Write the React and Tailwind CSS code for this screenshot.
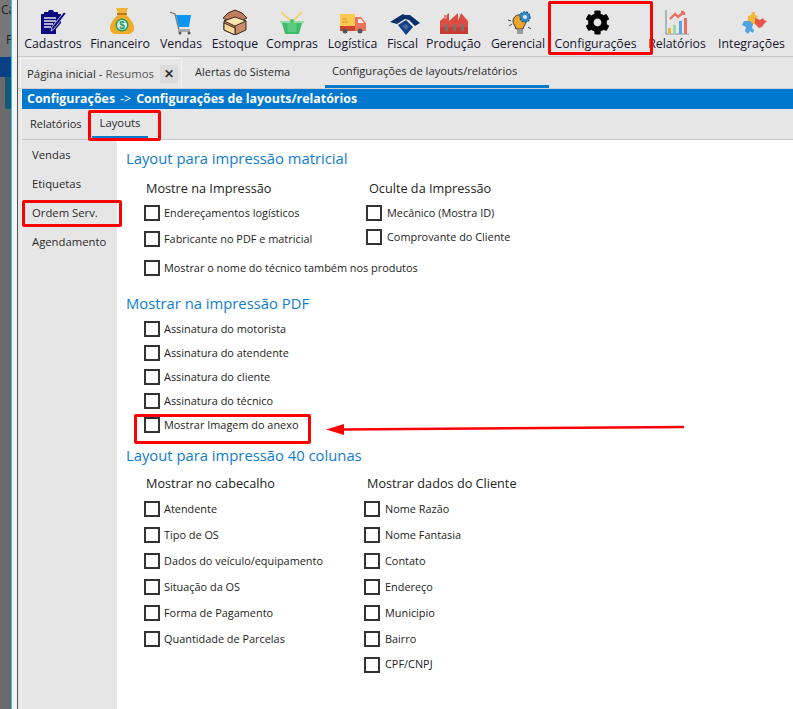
import { FaCog } from 'react-icons/fa'

function CadastrosIcon() {
  return (
    <svg width="26" height="26" viewBox="0 0 26 26">
      <path d="M1 5h3v-2h4l1-2h4l1 2h4v2h3v9l-5 6v5H1z" fill="#0a0a82" />
      <path d="M4 9h12M4 12h12M4 15h9M4 18h7" stroke="#e6e6e6" strokeWidth="1.3" />
      <path d="M24 3l2 1.5L14 20l-3 2 1-4z" fill="#0a0a82" stroke="#e6e6e6" strokeWidth="0.8" />
    </svg>
  )
}

function FinanceiroIcon() {
  return (
    <svg className="ml-[3px]" width="24" height="28" viewBox="0 0 24 28">
      <path d="M6 1h12l-2 5H8z" fill="#eeb437" />
      <path d="M7 6h10v2H7z" fill="#b97c1c" />
      <path d="M8 8h8c5 4 8 9 8 13 0 4-3 6-6 6H6c-3 0-6-2-6-6 0-4 3-9 8-13z" fill="#f2ab25" />
      <circle cx="12" cy="18" r="6.5" fill="#1f9a64" />
      <circle cx="12" cy="18" r="5" fill="#dff3e6" />
      <text x="12" y="21.5" textAnchor="middle" fontSize="10" fontWeight="700" fill="#1f9a64" fontFamily="Liberation Sans, sans-serif">$</text>
    </svg>
  )
}

function VendasIcon() {
  return (
    <svg width="22" height="24" viewBox="0 0 22 24">
      <path d="M0 1l5 2 4 16h10" fill="none" stroke="#77797b" strokeWidth="1.3" />
      <path d="M6 4h15l-2 12H9z" fill="#0a96f2" />
      <path d="M8 18h12v3H8z" fill="#a8a9aa" />
      <circle cx="10" cy="22" r="1.5" fill="#555" />
      <circle cx="19" cy="22" r="1.5" fill="#555" />
    </svg>
  )
}

function EstoqueIcon() {
  return (
    <svg width="26" height="26" viewBox="0 0 26 26">
      <path d="M13 8l11 4v9l-11 5-11-5v-9z" fill="#c98b68" stroke="#3d2a20" strokeWidth="1" />
      <path d="M13 1l7 3 5 5-6 3-6-4-6 4-6-3 5-5z" fill="#bd7d5e" stroke="#3d2a20" strokeWidth="1" />
      <path d="M2 12l11 5 11-5-11-4z" fill="#fbe3ae" stroke="#3d2a20" strokeWidth="1" />
      <path d="M13 17v9" stroke="#3d2a20" strokeWidth="1" />
      <path d="M2 14l11 5v7l-11-5z" fill="#f6d998" stroke="#3d2a20" strokeWidth="1" />
    </svg>
  )
}

function ComprasIcon() {
  return (
    <svg width="24" height="24" viewBox="0 0 24 24">
      <path d="M1 1l10 9M22 1l-9 9" stroke="#f3cf57" strokeWidth="1.6" />
      <path d="M0 10h24v2H0z" fill="#93dba8" />
      <path d="M2 12h20l-3 11H5z" fill="#3dbb67" />
      <path d="M7 12h10l-1 9H8z" fill="#5acb7d" />
      <circle cx="12" cy="10" r="2" fill="#55bb6e" />
    </svg>
  )
}

function LogisticaIcon() {
  return (
    <svg width="26" height="22" viewBox="0 0 26 22">
      <path d="M0 1h15v12H0z" fill="#fdc950" />
      <path d="M0 13h15v5H0z" fill="#d0432c" />
      <path d="M15 4h6l5 6v8H15z" fill="#ef7460" />
      <path d="M18 6h3l3 4h-6z" fill="#f4eee8" />
      <path d="M2 6h5M2 9h6" stroke="#c98a28" strokeWidth="0.9" />
      <circle cx="5" cy="18" r="2.5" fill="#55565a" />
      <circle cx="20" cy="18" r="2.5" fill="#55565a" />
    </svg>
  )
}

function FiscalIcon() {
  return (
    <svg className="ml-[4px]" width="30" height="22" viewBox="0 0 30 22">
      <path d="M0 9L13 1l5 3-11 7z" fill="#0a2f6b" />
      <path d="M15 2h5l10 8-5 3-6-6-4-1z" fill="#0a2f6b" />
      <path d="M8 12l8-5 7 7-7 8z" fill="#123f88" />
      <path d="M12 13l4-2 3 3-3 3z" fill="#e6e6e6" opacity="0.25" />
    </svg>
  )
}

function ProducaoIcon() {
  return (
    <svg width="28" height="23" viewBox="0 0 28 23">
      <path d="M0 9l9-8v8l9-8v8l3-8 7 8v13H0z" fill="#dc4c42" />
      <path d="M4 3h3v4H4z" fill="#e5857d" />
      <path d="M0 15h28v7H0z" fill="#c93c35" />
      <path d="M5 12h3v7H5zM13 12h3v7h-3zM21 12h3v7h-3z" fill="#7d6f6c" />
    </svg>
  )
}

function GerencialIcon() {
  return (
    <svg className="ml-[4px]" width="24" height="25" viewBox="0 0 24 25">
      <path d="M5 11a6.5 6.5 0 1 1 11 5l-1 3H8l-1-3a7 7 0 0 1-2-5z" fill="#eda62a" stroke="#3a3a3a" strokeWidth="1" />
      <path d="M9 20h6v4H9z" fill="#9a9a9a" />
      <circle cx="17" cy="7" r="5" fill="#2f8fd0" stroke="#1b5c8c" strokeWidth="1.5" strokeDasharray="2 1" />
      <circle cx="17" cy="7" r="2" fill="#e6e6e6" />
      <path d="M0 10l3 1M1 16l3-2M20 17l3 2" stroke="#444" strokeWidth="1" />
    </svg>
  )
}

function RelatoriosIcon() {
  return (
    <svg width="24" height="25" viewBox="0 0 24 25">
      <path d="M1 0v24h23" fill="none" stroke="#7f9aa6" strokeWidth="1.2" />
      <path d="M3 18h3v6H3z" fill="#f2b437" />
      <path d="M8 15h3v9H8z" fill="#9ed8a5" />
      <path d="M14 11h3v13h-3z" fill="#5ba5e8" />
      <path d="M19 8h3v16h-3z" fill="#ea6f62" />
      <path d="M5 9l5-5 3 3 6-5M19 2l-3 0M19 2v3" fill="none" stroke="#ea6f62" strokeWidth="2.4" />
    </svg>
  )
}

function IntegracoesIcon() {
  return (
    <svg className="ml-[6px]" width="25" height="24" viewBox="0 0 25 24">
      <path d="M6 5l3-1 1-3 3 0 0 3 3 1-2 8H5z" fill="#f2b83c" />
      <path d="M13 7l5 2 3-2 1 2 3 1-3 3-2 3-3 1-4-4z" fill="#e5564b" />
      <path d="M2 10h6l3 3-1 4 2 2-1 3-3-2-2 3-3-3 1-4-4-2z" fill="#4fa3e3" />
    </svg>
  )
}

const toolbar = [
  { label: 'Cadastros', width: 'w-[66px]', Icon: CadastrosIcon },
  { label: 'Financeiro', width: 'w-[68px]', Icon: FinanceiroIcon },
  { label: 'Vendas', width: 'w-[54px]', Icon: VendasIcon },
  { label: 'Estoque', width: 'w-[54px]', Icon: EstoqueIcon },
  { label: 'Compras', width: 'w-[60px]', Icon: ComprasIcon },
  { label: 'Logística', width: 'w-[61px]', Icon: LogisticaIcon },
  { label: 'Fiscal', width: 'w-[39px]', Icon: FiscalIcon },
  { label: 'Produção', width: 'w-[63px]', Icon: ProducaoIcon },
  { label: 'Gerencial', width: 'w-[66px]', Icon: GerencialIcon },
  { label: 'Configurações', width: 'w-[89px]', Icon: () => <FaCog className="ml-[3px] text-[25px] text-black" /> },
  { label: 'Relatórios', width: 'w-[74px]', Icon: RelatoriosIcon },
  { label: 'Integrações', width: 'w-[75px]', Icon: IntegracoesIcon },
]

function Check({ label, className = 'h-6' }) {
  return (
    <div className={`flex items-center ${className}`}>
      <span className="w-4 h-4 shrink-0 border-2 border-[#333] bg-white" />
      <span className="ml-1 text-[10.9px] text-[#1c1c1c] whitespace-nowrap">{label}</span>
    </div>
  )
}

function SectionTitle({ children, className = '' }) {
  return <h2 className={`text-[14.8px] leading-5 text-[#0f7ccb] font-normal ${className}`}>{children}</h2>
}

function GroupTitle({ children }) {
  return <div className="text-[12.7px] leading-5 text-[#222] whitespace-nowrap">{children}</div>
}

export default function App() {
  return (
    <div className="relative flex w-[793px] h-[709px] overflow-hidden bg-[#e6e6e6] text-[#1c1c1c]" style={{ fontFamily: '"Open Sans", "Noto Sans", sans-serif' }}>
      {/* janela de tras */}
      <div className="w-[11px] shrink-0 bg-[#6b6b6b] overflow-hidden text-[12px] text-[#222] flex flex-col">
        <div className="h-[31px] pl-[1px] pt-[1px] whitespace-nowrap bg-[#777]">Ca</div>
        <div className="h-[19px] pl-[6px] bg-[#777]">P</div>
        <div className="h-[7px] bg-[#777]" />
        <div className="h-[20px] bg-[#0b3f86]" />
        <div className="h-[32px] ml-[5px] bg-[#1b5878]" />
        <div className="flex-1" />
      </div>
      <div className="w-[7px] shrink-0 flex">
        <div className="w-px bg-[#28c3e8]" />
        <div className="flex-1 bg-[#f4f4f4]" />
        <div className="w-px bg-[#555]" />
      </div>

      <div className="flex-1 min-w-0 flex flex-col">
        {/* toolbar */}
        <div className="h-[57px] shrink-0 flex pl-[2px] border-b border-[#c8c8c8]">
          {toolbar.map(({ label, width, Icon }) => (
            <div key={label} className={`${width} shrink-0 flex flex-col items-center`}>
              <div className="h-[36px] flex items-end justify-center pb-[1px]">
                <Icon />
              </div>
              <div className="text-[12.3px] leading-[16px] whitespace-nowrap text-[#16162e]">{label}</div>
            </div>
          ))}
        </div>

        {/* abas */}
        <div className="h-[32px] shrink-0 flex items-stretch pl-[2px] border-b border-[#cfcfcf]">
          <div className="w-[162px] mt-px flex items-center justify-between pl-[6px] pr-[3px] border border-[#f4f4f4] border-b-0">
            <span className="text-[11.4px] text-[#2a2a2a] whitespace-nowrap">
              Página inicial - <span className="text-[#555]">Resumos</span>
            </span>
            <span className="w-[18px] h-[18px] flex items-center justify-center bg-[#dcdcdc] text-[12px] font-bold text-[#333]">✕</span>
          </div>
          <div className="w-[143px] flex items-center pl-[13px] text-[11px] text-[#2a2a2a]">Alertas do Sistema</div>
          <div className="w-[224px] flex items-center pl-[7px] text-[11.2px] text-[#2a2a2a] border-b-[3px] border-[#0078cf] whitespace-nowrap">
            Configurações de layouts/relatórios
          </div>
        </div>

        <div className="flex-1 min-h-0 flex flex-col ml-[3px] border-l border-[#f4f4f4]">
          <div className="h-[20px] shrink-0 bg-[#0078cf] flex items-center pl-[5px] pt-[1px] text-[12.4px] font-bold text-white whitespace-nowrap">
            Configurações <span className="font-normal mx-[5px]">-&gt;</span> Configurações de layouts/relatórios
          </div>

          <div className="h-[31px] shrink-0 flex items-stretch border-b border-[#c8c8c8] text-[11px] text-[#2a2a2a]">
            <div className="w-[70px] flex items-center pl-[8px]">Relatórios</div>
            <div className="w-[56px] flex items-center justify-center pt-[1px] text-[11.3px] border-b-2 border-[#0078cf] mb-[1px]">Layouts</div>
          </div>

          <div className="flex-1 min-h-0 flex">
            {/* menu lateral */}
            <div className="w-[95px] shrink-0 pl-[10px] pt-[1px] text-[11.3px] text-[#2a2a2a]">
              <div className="h-[29px] flex items-center">Vendas</div>
              <div className="h-[29px] flex items-center">Etiquetas</div>
              <div className="h-[29px] flex items-center">Ordem Serv.</div>
              <div className="h-[29px] flex items-center">Agendamento</div>
            </div>

            {/* conteudo */}
            <div className="flex-1 bg-white pl-[9px] pt-[8px]">
              <SectionTitle>Layout para impressão matricial</SectionTitle>

              <div className="flex mt-[10px]">
                <div className="w-[240px] pl-[18px]">
                  <div className="pl-[2px]"><GroupTitle>Mostre na Impressão</GroupTitle></div>
                  <Check label="Endereçamentos logísticos" className="h-[26px] mt-[2px]" />
                  <Check label="Fabricante no PDF e matricial" className="h-[26px]" />
                </div>
                <div>
                  <div className="pl-[3px]"><GroupTitle>Oculte da Impressão</GroupTitle></div>
                  <div className="w-[200px]">
                    <Check label="Mecânico (Mostra ID)" className="h-[24px] mt-[3px] gap-[1px]" />
                    <Check label="Comprovante do Cliente" className="h-[24px] gap-[1px]" />
                  </div>
                </div>
              </div>
              <div className="pl-[18px] mt-[3px]">
                <Check label="Mostrar o nome do técnico também nos produtos" className="h-[26px]" />
              </div>

              <SectionTitle className="mt-[12px]">Mostrar na impressão PDF</SectionTitle>
              <div className="pl-[18px] mt-[4px]">
                <Check label="Assinatura do motorista" />
                <Check label="Assinatura do atendente" />
                <Check label="Assinatura do cliente" />
                <Check label="Assinatura do técnico" />
                <Check label="Mostrar Imagem do anexo" />
              </div>

              <SectionTitle className="mt-[8px]">Layout para impressão 40 colunas</SectionTitle>

              <div className="flex mt-[8px]">
                <div className="w-[238px] pl-[18px]">
                  <div className="pl-[2px]"><GroupTitle>Mostrar no cabecalho</GroupTitle></div>
                  <div className="mt-[3px]">
                    <Check label="Atendente" className="h-[26px]" />
                    <Check label="Tipo de OS" className="h-[26px]" />
                    <Check label="Dados do veículo/equipamento" className="h-[26px]" />
                    <Check label="Situação da OS" className="h-[26px]" />
                    <Check label="Forma de Pagamento" className="h-[26px]" />
                    <Check label="Quantidade de Parcelas" className="h-[26px]" />
                  </div>
                </div>
                <div>
                  <div className="pl-[3px]"><GroupTitle>Mostrar dados do Cliente</GroupTitle></div>
                  <div className="mt-[3px]">
                    <Check label="Nome Razão" className="h-[26px] gap-[1px]" />
                    <Check label="Nome Fantasia" className="h-[26px] gap-[1px]" />
                    <Check label="Contato" className="h-[26px] gap-[1px]" />
                    <Check label="Endereço" className="h-[26px] gap-[1px]" />
                    <Check label="Municipio" className="h-[26px] gap-[1px]" />
                    <Check label="Bairro" className="h-[26px] gap-[1px]" />
                    <Check label="CPF/CNPJ" className="h-[25px] gap-[1px]" />
                  </div>
                </div>
              </div>
            </div>
          </div>
        </div>
      </div>

      {/* marcacoes vermelhas */}
      <div className="absolute left-[548px] top-[1px] w-[105px] h-[54px] border-[3px] border-[#f00] rounded-[2px]" />
      <div className="absolute left-[88px] top-[110px] w-[73px] h-[31px] border-[3px] border-[#f00] rounded-[2px]" />
      <div className="absolute left-[22px] top-[200px] w-[100px] h-[27px] border-[3px] border-[#f00] rounded-[2px]" />
      <div className="absolute left-[134px] top-[414px] w-[177px] h-[30px] border-[3px] border-[#f00] rounded-[2px]" />
      <svg className="absolute left-[326px] top-[420px]" width="360" height="18" viewBox="0 0 360 18">
        <path d="M16 9.5L358 7" stroke="#f00" strokeWidth="2.5" />
        <path d="M0 9.5L18 4v11z" fill="#f00" />
      </svg>
    </div>
  )
}
